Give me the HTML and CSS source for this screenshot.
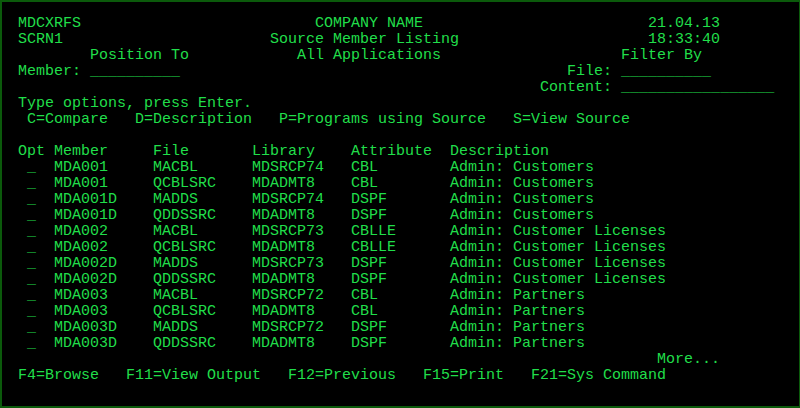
FILE: index.html
```html
<!DOCTYPE html>
<html lang="en">
<head>
<meta charset="utf-8">
<title>MDCXRFS - Source Member Listing</title>
<link rel="stylesheet" href="styles.css">
</head>
<body>
<main class="screen">
  <header class="head">
    <div class="line">MDCXRFS                          COMPANY NAME                         21.04.13</div>
    <div class="line">SCRN1                       Source Member Listing                     18:33:40</div>
    <div class="line">        Position To            All Applications                    Filter By</div>
    <div class="line">Member: <span class="field">__________</span>                                           File: <span class="field">__________</span></div>
    <div class="line">                                                          Content: <span class="field">_________________</span></div>
    <div class="line">Type options, press Enter.</div>
    <div class="line"> C=Compare   D=Description   P=Programs using Source   S=View Source</div>
    <div class="line"> </div>
  </header>

  <section class="list">
    <div class="row"><span>Opt</span><span>Member</span><span>File</span><span>Library</span><span>Attribute</span><span>Description</span></div>
    <div class="row"><span class="opt">_</span><span>MDA001</span><span>MACBL</span><span>MDSRCP74</span><span>CBL</span><span>Admin: Customers</span></div>
    <div class="row"><span class="opt">_</span><span>MDA001</span><span>QCBLSRC</span><span>MDADMT8</span><span>CBL</span><span>Admin: Customers</span></div>
    <div class="row"><span class="opt">_</span><span>MDA001D</span><span>MADDS</span><span>MDSRCP74</span><span>DSPF</span><span>Admin: Customers</span></div>
    <div class="row"><span class="opt">_</span><span>MDA001D</span><span>QDDSSRC</span><span>MDADMT8</span><span>DSPF</span><span>Admin: Customers</span></div>
    <div class="row"><span class="opt">_</span><span>MDA002</span><span>MACBL</span><span>MDSRCP73</span><span>CBLLE</span><span>Admin: Customer Licenses</span></div>
    <div class="row"><span class="opt">_</span><span>MDA002</span><span>QCBLSRC</span><span>MDADMT8</span><span>CBLLE</span><span>Admin: Customer Licenses</span></div>
    <div class="row"><span class="opt">_</span><span>MDA002D</span><span>MADDS</span><span>MDSRCP73</span><span>DSPF</span><span>Admin: Customer Licenses</span></div>
    <div class="row"><span class="opt">_</span><span>MDA002D</span><span>QDDSSRC</span><span>MDADMT8</span><span>DSPF</span><span>Admin: Customer Licenses</span></div>
    <div class="row"><span class="opt">_</span><span>MDA003</span><span>MACBL</span><span>MDSRCP72</span><span>CBL</span><span>Admin: Partners</span></div>
    <div class="row"><span class="opt">_</span><span>MDA003</span><span>QCBLSRC</span><span>MDADMT8</span><span>CBL</span><span>Admin: Partners</span></div>
    <div class="row"><span class="opt">_</span><span>MDA003D</span><span>MADDS</span><span>MDSRCP72</span><span>DSPF</span><span>Admin: Partners</span></div>
    <div class="row"><span class="opt">_</span><span>MDA003D</span><span>QDDSSRC</span><span>MDADMT8</span><span>DSPF</span><span>Admin: Partners</span></div>
  </section>

  <footer class="foot">
    <div class="line">                                                                       More...</div>
    <div class="line">F4=Browse   F11=View Output   F12=Previous   F15=Print   F21=Sys Command</div>
  </footer>
</main>
</body>
</html>
```

FILE: styles.css
```css
/* 5250-style green screen: 80 x 24 character grid */
html, body {
  margin: 0;
  padding: 0;
  background: #000;
}

.screen {
  box-sizing: border-box;
  width: 800px;
  height: 408px;
  border: 2px solid #0b5a0b;
  border-right-width: 1px;
  padding: 14px 16px 0 16px;
  background: #000;
  color: #20de4a;
  font-family: "Liberation Mono", "DejaVu Sans Mono", monospace;
  font-size: 15px;
  line-height: 16px;
  overflow: hidden;
}

.line {
  white-space: pre;
  height: 16px;
}

.field {
  white-space: pre;
}

/* subfile rows: Opt, Member, File, Library, Attribute, Description */
.row {
  display: grid;
  grid-template-columns: 4ch 11ch 11ch 11ch 11ch auto;
  height: 16px;
  white-space: pre;
}

.opt {
  padding-left: 1ch;
}
```
